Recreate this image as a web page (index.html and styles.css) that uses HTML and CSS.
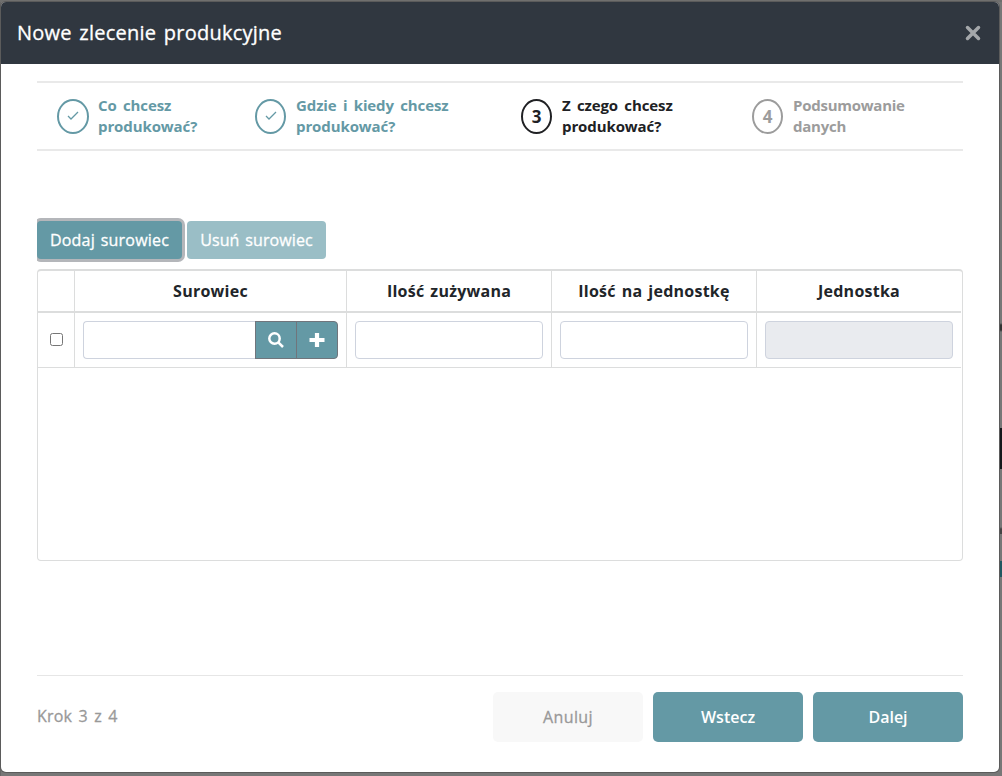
FILE: index.html
```
<!DOCTYPE html>
<html lang="pl">
<head>
<meta charset="utf-8">
<title>Nowe zlecenie produkcyjne</title>
<link rel="stylesheet" href="styles.css">
</head>
<body>
<main class="modal">
  <header class="modal-header">
    <h1 class="title">Nowe zlecenie produkcyjne</h1>
    <svg class="close" viewBox="0 0 16 16"><path d="M2.500 2.500l11 11M13.500 2.500l-11 11"/></svg>
  </header>
  <section class="modal-body">
    <ol class="steps">
      <li class="step done first"><span class="dot"><svg class="tick" viewBox="0 0 12 10"><path d="M1 5l3 3L11 1"/></svg></span><span class="label">Co chcesz<br>produkować?</span></li>
      <li class="step done second"><span class="dot"><svg class="tick" viewBox="0 0 12 10"><path d="M1 5l3 3L11 1"/></svg></span><span class="label">Gdzie i kiedy chcesz<br>produkować?</span></li>
      <li class="step active third"><span class="dot">3</span><span class="label">Z czego chcesz<br>produkować?</span></li>
      <li class="step pending"><span class="dot">4</span><span class="label">Podsumowanie<br>danych</span></li>
    </ol>
    <div class="toolbar">
      <button class="btn add">Dodaj surowiec</button>
      <button class="btn remove">Usuń surowiec</button>
    </div>
    <div class="table">
      <div class="row head">
        <div class="cell"></div>
        <div class="cell">Surowiec</div>
        <div class="cell">Ilość zużywana</div>
        <div class="cell">Ilość na jednostkę</div>
        <div class="cell last">Jednostka</div>
      </div>
      <div class="row line">
        <div class="cell check"><span class="box"></span></div>
        <div class="cell group">
          <span class="field lookup"></span>
          <span class="addon"><svg class="icon" viewBox="0 0 16 16"><circle cx="6.500" cy="6.500" r="5.200"/><path d="M10.300 10.300l4.700 4.700"/></svg></span>
          <span class="addon end"><svg class="icon plus" viewBox="0 0 16 16"><path d="M8 1v14M.5 8h15"/></svg></span>
        </div>
        <div class="cell"><span class="field"></span></div>
        <div class="cell"><span class="field"></span></div>
        <div class="cell last"><span class="field disabled"></span></div>
      </div>
    </div>
    <footer class="footer">
      <span class="progress">Krok 3 z 4</span>
      <button class="action cancel">Anuluj</button>
      <button class="action">Wstecz</button>
      <button class="action">Dalej</button>
    </footer>
  </section>
</main>
</body>
</html>
```
FILE: styles.css
```
* { box-sizing: border-box; }
html { height: 100%; }
body {
  margin: 0;
  height: 776px;
  overflow: hidden;
  padding: 2px 3px 4px 1px;
  font-family: "Open Sans", "Noto Sans", sans-serif;
  background:
    linear-gradient(#6f6f6e, #6f6f6e) 0 0 / 1002px 2px no-repeat,
    linear-gradient(#0000 323px, #333 325px 330px, #0000 332px 428px, #14181b 428px 469px, #0000 469px 527px, #444 529px 534px, #0000 534px 561px, #205861 561px 577px, #0000 577px) 999px 0 / 3px 776px no-repeat,
    linear-gradient(#666 26px, #15191d 26px 58px, #555 58px 61px, #0d1014 61px 101px, #666 101px 113px, #0b0e12 113px 188px, #666 188px 200px, #0b0e12 200px 275px, #666 275px 428px, #0b0e12 428px 469px, #666 469px 506px, #222 506px 513px, #666 513px 606px, #0b0e12 606px 647px, #666 647px 685px, #222 685px 692px, #666 692px) 0 0 / 1px 776px no-repeat,
    #777;
}
.modal {
  height: 770px;
  background: #fff;
  border-radius: 5px;
  overflow: hidden;
  box-shadow: 0 0 0 1px #5b5b5b;
}
.modal-header {
  height: 62px;
  padding: 0 18px 0 16px;
  display: flex;
  align-items: center;
  justify-content: space-between;
  background: #303740;
}
.title {
  margin: 0;
  color: #fff;
  font-size: 20px;
  font-weight: 500;
  line-height: 28px;
  letter-spacing: .25px;
  word-spacing: 2px;
  -webkit-text-stroke: .3px;
}
.close { width: 16px; height: 16px; fill: none; stroke: #a4a7aa; stroke-width: 3.500; stroke-linecap: round; }
.modal-body { padding: 17px 36px 0; }
.steps {
  display: flex;
  align-items: center;
  height: 70px;
  margin: 0;
  padding: 0 20px;
  list-style: none;
  border: solid #e9e9e9;
  border-width: 2px 0;
}
.step { display: flex; align-items: center; gap: 10px; color: #9c9c9c; font-size: 15px; font-weight: 700; line-height: 21px; }
.first { width: 198px; }
.second { width: 266px; }
.third { width: 231px; }
.dot { width: 31px; height: 35px; border: 2px solid; border-radius: 50%; display: flex; align-items: center; justify-content: center; font-size: 17px; }
.first .dot { width: 32px; margin-right: -1px; }
.label { white-space: nowrap; letter-spacing: -.1px; word-spacing: 2.500px; }
.pending .label { letter-spacing: -.25px; }
.done { color: #6499a5; }
.active { color: #202124; }
.tick { width: 12px; height: 10px; fill: none; stroke: currentColor; stroke-width: 1.3; }
.toolbar { display: flex; gap: 5px; margin-top: 70px; }
.btn {
  height: 38px;
  padding: 0;
  border: 0;
  border-radius: 4px;
  background: #6499a5;
  color: #fff;
  font: 500 16px "Open Sans", sans-serif;
  letter-spacing: .2px;
  word-spacing: 1.500px;
  -webkit-text-stroke: .3px;
}
.add { width: 145px; box-shadow: 0 0 0 3px #b4b6ba; clip-path: inset(-3px -3px -3px 0); }
.remove { width: 139px; background: #9abec6; letter-spacing: .1px; }
.table { height: 292px; margin-top: 10px; border: 1px solid #dcdddd; border-top-width: 2px; border-radius: 4px; }
.row { display: grid; grid-template-columns: 37px 272px 205px 205px 204px; width: 923px; }
.head {
  height: 42px;
  border-bottom: 2px solid #dcdddd;
  color: #212529;
  font-size: 16px;
  font-weight: 700;
  text-align: center;
  line-height: 40px;
  letter-spacing: .25px;
  word-spacing: 1.500px;
}
.line { height: 55px; border-bottom: 1px solid #dcdddd; }
.cell { border-right: 1px solid #dcdddd; }
.line .cell { padding: 8px; }
.cell.last { border-right: 0; }
.line .check { display: flex; align-items: center; justify-content: center; padding: 0 0 2px; }
.box { width: 13px; height: 13px; border: 1px solid #767676; border-radius: 2.500px; }
.field { display: block; height: 38px; border: 1px solid #ced3de; border-radius: 4px; background: #fff; }
.disabled { background: #e9ebef; }
.group { display: flex; }
.lookup { width: 172px; border-right: 0; border-radius: 4px 0 0 4px; }
.addon { width: 42px; height: 38px; border: 1px solid #70757c; background: #6499a5; display: flex; align-items: center; justify-content: center; }
.end { margin-left: -1px; border-radius: 0 4px 4px 0; }
.icon { width: 16px; height: 16px; fill: none; stroke: #fff; stroke-width: 2.500; }
.plus { stroke-width: 4.200; }
.footer { display: flex; align-items: flex-start; gap: 10px; margin-top: 114px; padding-top: 16px; border-top: 1px solid #e6e6e6; }
.progress { flex: 1; color: #999; font-size: 16px; line-height: 48px; letter-spacing: .2px; word-spacing: 2px; -webkit-text-stroke: .3px; }
.action { width: 150px; height: 50px; padding: 0; border: 0; border-radius: 5px; background: #6499a5; color: #fff; font: 600 16px "Open Sans", sans-serif; }
.cancel { background: #f8f8f8; color: #999; font-weight: 500; letter-spacing: .4px; -webkit-text-stroke: .3px; }
```
